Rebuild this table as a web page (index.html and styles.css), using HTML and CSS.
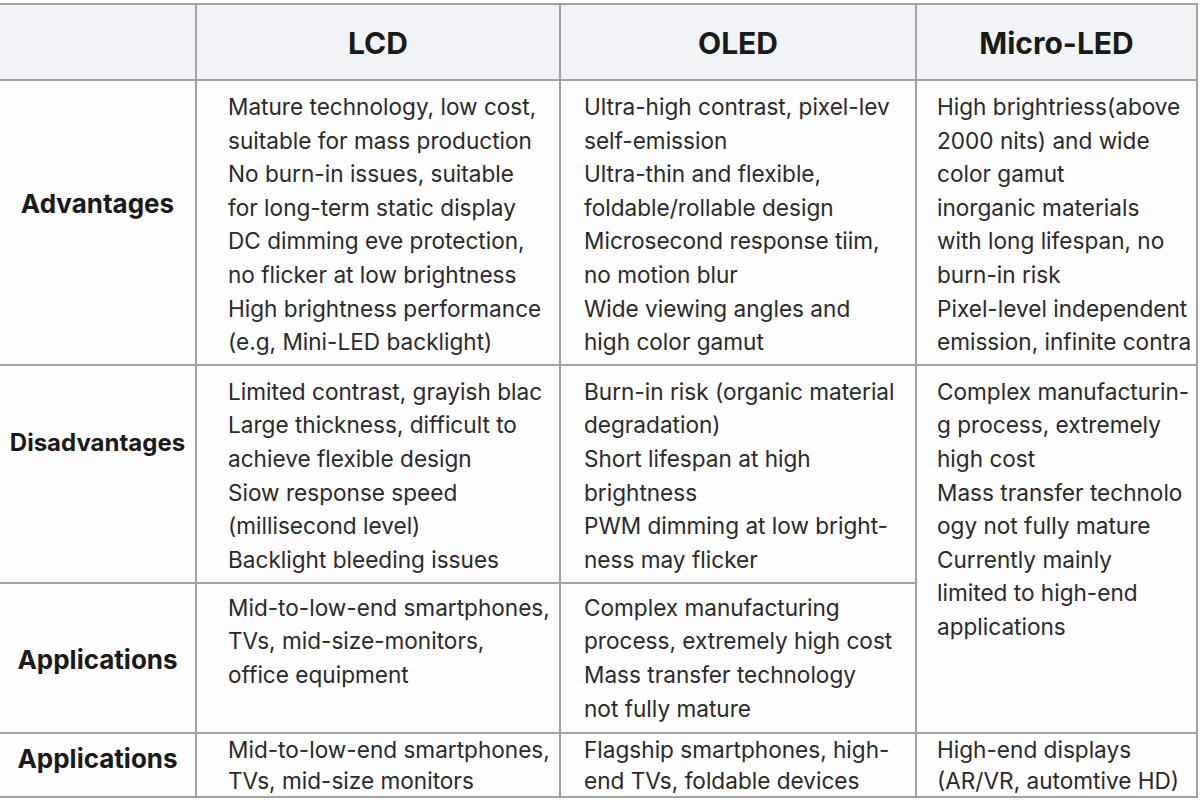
FILE: index.html
```html
<!DOCTYPE html>
<html lang="en">
<head>
<meta charset="utf-8">
<title>Display technology comparison</title>
<link rel="stylesheet" href="styles.css">
</head>
<body>
<table class="cmp">
  <colgroup>
    <col class="c-label">
    <col class="c-lcd">
    <col class="c-oled">
    <col class="c-micro">
  </colgroup>
  <thead>
    <tr class="head">
      <th class="corner"></th>
      <th>LCD</th>
      <th>OLED</th>
      <th>Micro-LED</th>
    </tr>
  </thead>
  <tbody>
    <tr class="r-adv">
      <th class="label">Advantages</th>
      <td class="lcd">Mature technology, low cost,<br>suitable for mass production<br>No burn-in issues, suitable<br>for long-term static display<br>DC dimming eve protection,<br>no flicker at low brightness<br>High brightness performance<br>(e.g, Mini-LED backlight)</td>
      <td class="oled">Ultra-high contrast, pixel-lev<br>self-emission<br>Ultra-thin and flexible,<br>foldable/rollable design<br>Microsecond response tiim,<br>no motion blur<br>Wide viewing angles and<br>high color gamut</td>
      <td class="micro">High brightriess(above<br>2000 nits) and wide<br>color gamut<br>inorganic materials<br>with long lifespan, no<br>burn-in risk<br>Pixel-level independent<br>emission, infinite contra</td>
    </tr>
    <tr class="r-dis">
      <th class="label narrow">Disadvantages</th>
      <td class="lcd">Limited contrast, grayish blac<br>Large thickness, difficult to<br>achieve flexible design<br>Siow response speed<br>(millisecond level)<br>Backlight bleeding issues</td>
      <td class="oled">Burn-in risk (organic material<br>degradation)<br>Short lifespan at high<br>brightness<br>PWM dimming at low bright-<br>ness may flicker</td>
      <td class="micro" rowspan="2">Complex manufacturin-<br>g process, extremely<br>high cost<br>Mass transfer technolo<br>ogy not fully mature<br>Currently mainly<br>limited to high-end<br>applications</td>
    </tr>
    <tr class="r-app">
      <th class="label">Applications</th>
      <td class="lcd">Mid-to-low-end smartphones,<br>TVs, mid-size-monitors,<br>office equipment</td>
      <td class="oled">Complex manufacturing<br>process, extremely high cost<br>Mass transfer technology<br>not fully mature</td>
    </tr>
    <tr class="r-app2">
      <th class="label">Applications</th>
      <td class="lcd">Mid-to-low-end smartphones,<br>TVs, mid-size monitors</td>
      <td class="oled">Flagship smartphones, high-<br>end TVs, foldable devices</td>
      <td class="micro">High-end displays<br>(AR/VR, automtive HD)</td>
    </tr>
  </tbody>
</table>
</body>
</html>
```
FILE: styles.css
```css
html, body {
  margin: 0;
  padding: 0;
  background: #ffffff;
}
body {
  padding-top: 3px;
  font-family: Inter, "Noto Sans", sans-serif;
  color: #2a2a2a;
}
.cmp {
  width: 1197px;
  border-collapse: collapse;
  table-layout: fixed;
  background: #fdfdfd;
}
.c-label { width: 196px; }
.c-lcd { width: 364px; }
.c-oled { width: 356px; }
.c-micro { width: 281px; }

.cmp th, .cmp td {
  border: 2px solid #a2a2a2;
  white-space: nowrap;
  overflow: hidden;
}
.cmp tr > :first-child {
  border-left: none;
}
.head th {
  height: 72px;
  background: #f1f3f7;
  font-size: 30px;
  font-weight: 700;
  color: #1a1a1a;
  text-align: center;
  vertical-align: middle;
  padding: 2px 0 0 0;
}
.label {
  font-size: 26px;
  font-weight: 700;
  color: #1a1a1a;
  text-align: center;
  vertical-align: middle;
  padding: 0;
}
.label.narrow {
  font-size: 24px;
}
.r-adv .label { padding-bottom: 38px; }
.r-dis .label { padding-bottom: 62px; }
.r-app .label { padding-top: 4px; }
.r-app2 .label { padding-bottom: 12px; }

td {
  font-size: 22.6px;
  line-height: 33.6px;
  vertical-align: top;
  text-align: left;
  padding: 9px 4px 5px 0;
}
td.lcd { padding-left: 31px; }
td.oled { padding-left: 23px; }
td.micro { padding-left: 20px; }

.r-adv td { height: 268px; }
.r-dis td { height: 202px; padding-top: 9px; }
.r-app td { padding-top: 7px; padding-bottom: 0; height: 141px; }
.r-app2 td {
  line-height: 31px;
  padding-top: 0;
  padding-bottom: 0;
  height: 61px;
}
```
